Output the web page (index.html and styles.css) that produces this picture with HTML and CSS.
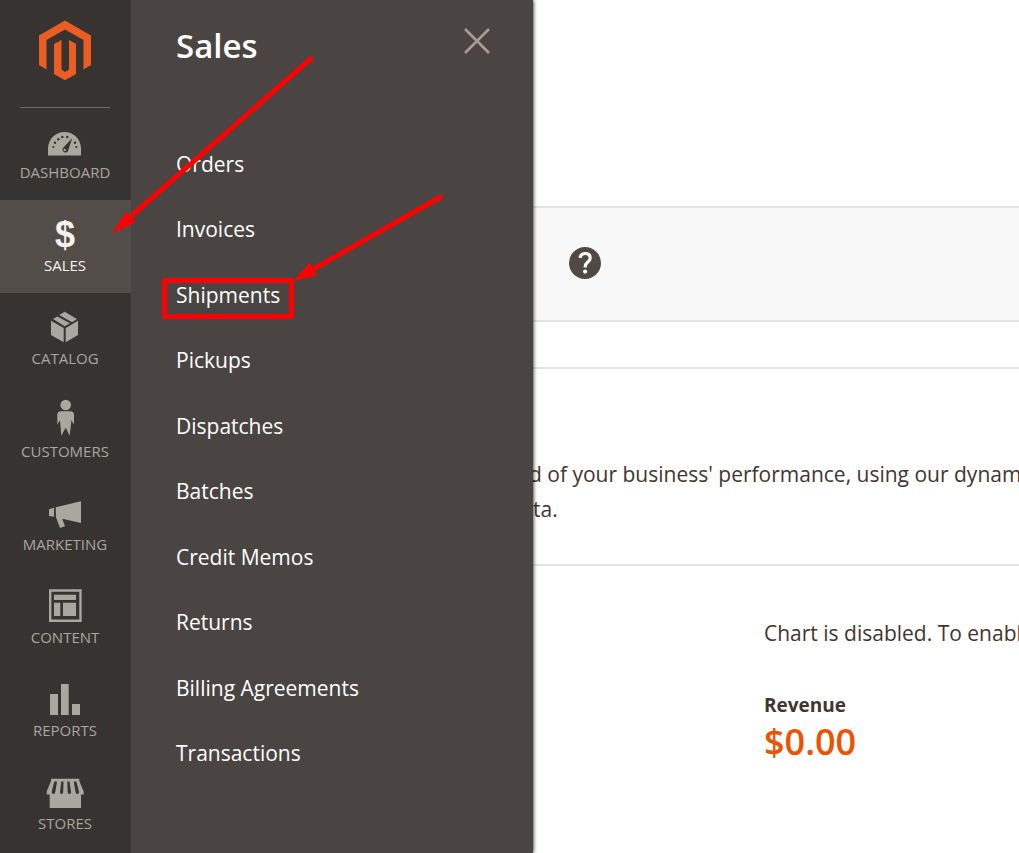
FILE: index.html
```html
<!DOCTYPE html>
<html lang="en">
<head>
<meta charset="utf-8">
<title>Dashboard / Magento Admin</title>
<link rel="stylesheet" href="styles.css">
</head>
<body>
<div class="app">
  <nav class="sidebar" aria-label="Main">
    <a class="logo" href="#" aria-label="Magento">
      <svg width="54" height="62" viewBox="38 20 54 62" fill="#eb5e23"><path d="M65 20.5 91 35.5V65l-7.5 4.5V40L65 29.5 46.5 40v29.5L39 65V35.5z"/><path d="M54 44l7.500-4v29.500L65 72l4-2.500V40l7 4v30l-11 6.300L54 74z"/></svg>
    </a>
    <ul class="nav-list">
      <li><a class="nav-item" href="#"><svg class="icon" viewBox="0 0 44 44"><path d="M5 33.500V26.500a16.500 16.500 0 0 1 33 0V33.500z"/><g class="cut"><circle cx="10.300" cy="25" r="1.100"/><circle cx="12" cy="20.700" r="1.200"/><circle cx="15.300" cy="17.300" r="1.200"/><circle cx="19.300" cy="15" r="1.200"/><circle cx="24.300" cy="15" r="1.200"/><circle cx="32" cy="20.700" r="1.200"/><circle cx="33.300" cy="25" r="1.100"/><path d="M29.300 16 25 29a2.800 2.800 0 1 1-5-3z"/></g><circle cx="21.700" cy="28" r="1.200"/></svg><span>Dashboard</span></a></li>
      <li><a class="nav-item active" href="#"><span class="icon dollar">$</span><span>Sales</span></a></li>
      <li><a class="nav-item" href="#"><svg class="icon" viewBox="0 0 44 44"><path d="M8 12.700 20.700 20v14.300L8 27zM22.700 20 35 12.700V27l-12.300 7.300zM10 11l4.300-2.600L27 15.300 21.700 18.200zM16.300 7l5.400-3.300L34 11l-5 3.200z"/></svg><span>Catalog</span></a></li>
      <li><a class="nav-item" href="#"><svg class="icon" viewBox="0 0 44 44"><circle cx="22.700" cy="4" r="5.300"/><path d="M18 10.200h9.400q3.600 0 3.600 3.600v9.800l-2.600-4.400-1.700 15.500-4-8-4.400 8L17 19.200l-2.700 4.400v-9.800q0-3.600 3.700-3.600z"/></svg><span>Customers</span></a></li>
      <li><a class="nav-item" href="#"><svg class="icon" viewBox="0 0 44 44"><path d="M6 15.300l5-1.500v9l-5-.8zM12.700 13.300 38 7.300V29l-18.700-4.300 2.700 7.600-5 1.700-4-10.700z"/></svg><span>Marketing</span></a></li>
      <li><a class="nav-item" href="#"><svg class="icon" viewBox="0 0 44 44"><path fill-rule="evenodd" d="M6 2.300h32.700V35H6zM8.400 4.700v27.900h27.900V4.700z"/><path d="M11 7.700h22V13H11zM11 15.700h6.300V29H11zM20 15.700h13V29H20z"/></svg><span>Content</span></a></li>
      <li><a class="nav-item" href="#"><svg class="icon" viewBox="0 0 44 44"><path d="M7 14h8v21H7zM18 4h7.700v31H18zM29 24h8v11h-8z"/></svg><span>Reports</span></a></li>
      <li><a class="nav-item" href="#"><svg class="icon" viewBox="0 0 44 44"><path d="M8 5.700h28.300v2.300l4.400 10.500v3H38V35H6.700V21.500h-3v-3L8 8z"/><path class="cut" d="M11.300 8.500H14L12.300 19q-.3 2-2 2t-1.600-2zM18.300 8.500h2.200L20.200 19q-.2 2-1.700 2T17 19zM24.300 8.500h2.200L28 19q.2 2-1.500 2t-1.800-2zM30.800 8.500h2.600L36 19q.2 2-1.500 2t-2-2z"/></svg><span>Stores</span></a></li>
    </ul>
  </nav>

  <section class="submenu" aria-label="Sales">
    <header class="submenu-head">
      <h2>Sales</h2>
      <button class="close" type="button" aria-label="Close">
        <svg width="28" height="28" viewBox="0 0 28 28" fill="none" stroke="#a79d95" stroke-width="2.600"><path d="M2 2l24 24M26 2 2 26"/></svg>
      </button>
    </header>
    <ul class="submenu-list">
      <li><a href="#">Orders</a></li>
      <li><a href="#">Invoices</a></li>
      <li><a href="#">Shipments</a></li>
      <li><a href="#">Pickups</a></li>
      <li><a href="#">Dispatches</a></li>
      <li><a href="#">Batches</a></li>
      <li><a href="#">Credit Memos</a></li>
      <li><a href="#">Returns</a></li>
      <li><a href="#">Billing Agreements</a></li>
      <li><a href="#">Transactions</a></li>
    </ul>
  </section>

  <main class="content">
    <div class="toolbar">
      <button class="help" type="button" aria-label="Help">
        <svg width="32" height="32" viewBox="0 0 32 32"><circle cx="16" cy="16" r="16" fill="#514943"/><path d="M11 10.800q1-4.300 5.200-4.300 5 0 5 4.500 0 2.300-2.600 4.200-2.400 1.800-2.400 4.600v.7" fill="none" stroke="#fff" stroke-width="3.200"/><circle cx="16.100" cy="24.600" r="2.100" fill="#fff"/></svg>
      </button>
    </div>
    <div class="intro">
      <p>d of your business' performance, using our dynam</p>
      <p class="second">ta.</p>
    </div>
    <div class="stats">
      <p>Chart is disabled. To enabl</p>
      <h3>Revenue</h3>
      <strong>$0.00</strong>
    </div>
  </main>

  <svg class="marks" width="460" height="330" viewBox="0 0 460 330" aria-hidden="true">
    <g fill="none" stroke="#f00" stroke-width="5" stroke-linecap="round">
      <path d="M310.500 59 128 219M440.500 197 310 271"/>
      <rect x="164.500" y="280.500" width="127" height="36" stroke-linejoin="round"/>
    </g>
    <path fill="#f00" d="M112 233.500 126 212l4 4.500 5.500 6zM293 281l17-18.500 2.500 6 4.500 7z"/>
  </svg>
</div>
</body>
</html>
```
FILE: styles.css
```css
* { box-sizing: border-box; }

body {
  margin: 0;
  font-family: "Open Sans", "Noto Sans", sans-serif;
  font-size: 21px;
  color: #41362f;
  background: #fff;
}

h2, h3, p, ul { margin: 0; padding: 0; }
ul { list-style: none; }
a { color: inherit; text-decoration: none; }
button { padding: 0; border: 0; background: none; cursor: pointer; }
svg { display: block; }

.app {
  position: relative;
  display: flex;
  min-height: 100vh;
  overflow: hidden;
}

.sidebar {
  position: relative;
  z-index: 2;
  flex: 0 0 131px;
  background: #373330;
}

.logo {
  display: flex;
  justify-content: center;
  height: 108px;
  margin: 0 21px -1px 20px;
  padding-top: 20px;
  border-bottom: 1px solid #736963;
}

.nav-item {
  display: flex;
  flex-direction: column;
  align-items: center;
  height: 93px;
  padding: 15px 1px 0 0;
  font-size: 15px;
  line-height: 20px;
  text-transform: uppercase;
  color: #aaa6a0;
}

.nav-item.active {
  background: #524d49;
  color: #f7f3eb;
}

.icon {
  width: 44px;
  height: 40px;
  flex: none;
  overflow: visible;
  fill: #aaa6a0;
}

svg.icon { height: 44px; margin-bottom: -4px; }
.cut { fill: #373330; }

.dollar {
  font: bold 36px/40px "Liberation Sans", Arial, sans-serif;
  text-align: center;
}

.submenu {
  position: relative;
  z-index: 1;
  flex: 0 0 402px;
  display: flex;
  flex-direction: column;
  padding: 22px 42px 84px 45px;
  background: #4a4542;
  color: #fff;
  box-shadow: 0 0 4px #000;
}

.submenu-head {
  display: flex;
  justify-content: space-between;
  align-items: flex-start;
  height: 126px;
}

.submenu-head h2 {
  font-size: 33px;
  font-weight: 600;
  line-height: 48px;
}

.close { padding-top: 5px; }

.submenu-list {
  flex: 1;
  display: flex;
  flex-direction: column;
  justify-content: space-between;
}

.submenu-list a { display: block; line-height: 32px; }

.content {
  flex: 1;
  min-width: 0;
  margin-left: -4px;
  padding-top: 206px;
  white-space: nowrap;
  line-height: 35px;
}

.toolbar {
  display: flex;
  align-items: center;
  height: 116px;
  padding: 0 40px 2px;
  border: solid #e3e3e3;
  border-width: 2px 0;
  background: #f8f8f8;
}

.intro {
  height: 199px;
  margin-top: 45px;
  padding-top: 88px;
  border: solid #e3e3e3;
  border-width: 2px 0;
}

.second { padding-left: 4px; }

.stats { padding: 50px 0 0 235px; }

.stats h3 {
  margin-top: 40px;
  font-size: 19px;
  font-weight: 700;
  line-height: 28px;
}

.stats strong {
  display: block;
  font-size: 36px;
  font-weight: 600;
  line-height: 46px;
  color: #eb5202;
}

.marks {
  position: absolute;
  top: 0;
  left: 0;
  z-index: 3;
  pointer-events: none;
}
```
